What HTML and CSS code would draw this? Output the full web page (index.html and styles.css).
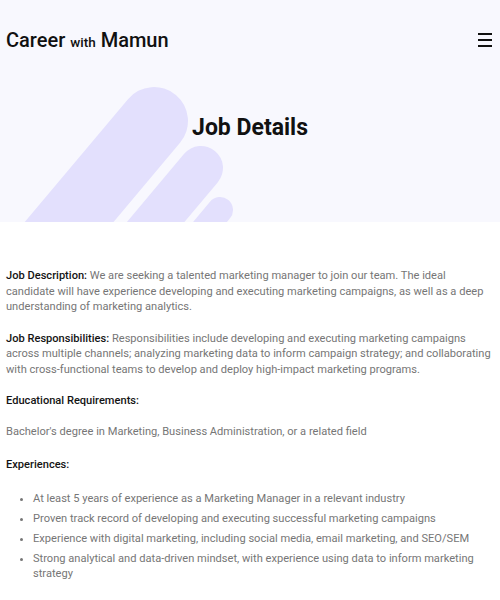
FILE: index.html
```html
<!DOCTYPE html>
<html lang="en">
<head>
<meta charset="utf-8">
<title>Job Details - Career with Mamun</title>
<link rel="stylesheet" href="styles.css">
</head>
<body>
<section class="hero">
  <svg class="hero-art" width="500" height="222" viewBox="0 0 500 222" aria-hidden="true">
    <line x1="154" y1="121" x2="-30" y2="340" stroke="#e3e0fd" stroke-width="68" stroke-linecap="round"/>
    <line x1="201" y1="168" x2="60" y2="336" stroke="#e3e0fd" stroke-width="44" stroke-linecap="round"/>
    <line x1="220" y1="210" x2="160" y2="282" stroke="#e3e0fd" stroke-width="26" stroke-linecap="round"/>
  </svg>
  <header class="topbar">
    <a class="brand" href="#">Career <span class="brand-small">with</span> Mamun</a>
    <button class="menu" aria-label="Menu"><span></span><span></span><span></span></button>
  </header>
  <h1 class="title">Job Details</h1>
</section>
<main class="content">
  <p><strong>Job Description:</strong> We are seeking a talented marketing manager to join our team. The ideal candidate will have experience developing and executing marketing campaigns, as well as a deep understanding of marketing analytics.</p>
  <p><strong>Job Responsibilities:</strong> Responsibilities include developing and executing marketing campaigns across multiple channels; analyzing marketing data to inform campaign strategy; and collaborating with cross-functional teams to develop and deploy high-impact marketing programs.</p>
  <h2>Educational Requirements:</h2>
  <p class="edu">Bachelor's degree in Marketing, Business Administration, or a related field</p>
  <h2>Experiences:</h2>
  <ul>
    <li>At least 5 years of experience as a Marketing Manager in a relevant industry</li>
    <li>Proven track record of developing and executing successful marketing campaigns</li>
    <li>Experience with digital marketing, including social media, email marketing, and SEO/SEM</li>
    <li>Strong analytical and data-driven mindset, with experience using data to inform marketing strategy</li>
  </ul>
</main>
</body>
</html>
```
FILE: styles.css
```css
* { box-sizing: border-box; }
body {
  margin: 0;
  font-family: Roboto, "Noto Sans", sans-serif;
  background: #ffffff;
  color: #111;
}
.hero {
  position: relative;
  height: 222px;
  background: #f8f8fe;
  overflow: hidden;
}
.hero-art {
  position: absolute;
  left: 0;
  top: 0;
}
.topbar {
  position: relative;
  display: flex;
  justify-content: space-between;
  align-items: center;
  padding: 28px 8px 0 6px;
}
.brand {
  color: #111;
  text-decoration: none;
  font-size: 20px;
  font-weight: 500;
}
.brand-small {
  font-size: 13.5px;
}
.menu {
  display: flex;
  flex-direction: column;
  gap: 4px;
  width: 14px;
  padding: 0;
  border: 0;
  background: none;
}
.menu span {
  display: block;
  height: 2px;
  background: #111;
}
.title {
  position: relative;
  margin: 62px 0 0;
  text-align: center;
  font-size: 23px;
  font-weight: 700;
}
.content {
  padding: 46px 5px 20px 6px;
  font-size: 11.1px;
  line-height: 15.5px;
  color: #767676;
}
.content p { margin: 0 0 16px; }
.content strong, .content h2 {
  color: #141414;
  font-weight: 500;
}
.content h2 {
  margin: 0 0 15px;
  font-size: 11.1px;
  line-height: 15.5px;
}
.content .edu { margin-bottom: 18px; }
.content ul {
  margin: 18px 0 0;
  padding-left: 27px;
}
.content li { margin-bottom: 4.5px; }
```
